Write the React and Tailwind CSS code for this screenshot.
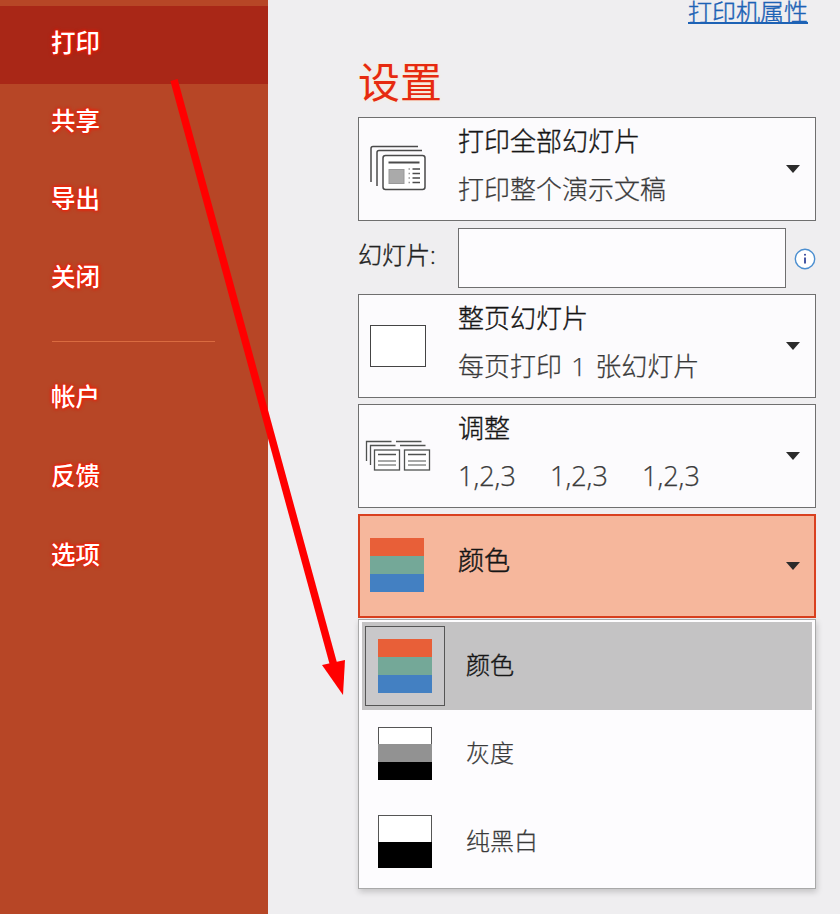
import React, { useState } from 'react';

const primaryNav = ['打印', '共享', '导出', '关闭'];
const secondaryNav = ['帐户', '反馈', '选项'];

const colorModes = [
  { id: 'color', label: '颜色', Icon: ColorIcon },
  { id: 'gray', label: '灰度', Icon: GrayscaleIcon },
  { id: 'bw', label: '纯黑白', Icon: BlackWhiteIcon },
];

/* --- Icons --- */

function ColorIcon() {
  return (
    <svg width="54" height="54" viewBox="0 0 54 54" className="shrink-0">
      <rect width="54" height="18" fill="#e85f38" />
      <rect y="18" width="54" height="18" fill="#74a898" />
      <rect y="36" width="54" height="18" fill="#4380c2" />
    </svg>
  );
}

function GrayscaleIcon() {
  return (
    <svg width="54" height="54" viewBox="0 0 54 54" className="shrink-0">
      <rect x="0.5" y="0.5" width="53" height="35" fill="#fff" stroke="#555" />
      <rect y="17" width="54" height="18" fill="#929292" />
      <rect y="35" width="54" height="18" fill="#000" />
    </svg>
  );
}

function BlackWhiteIcon() {
  return (
    <svg width="54" height="54" viewBox="0 0 54 54" className="shrink-0">
      <rect x="0.5" y="0.5" width="53" height="35" fill="#fff" stroke="#555" />
      <rect y="27" width="54" height="26" fill="#000" />
    </svg>
  );
}

function AllSlidesIcon() {
  return (
    <svg width="58" height="48" viewBox="0 0 58 48" fill="none" stroke="#4a4a4a" strokeWidth="1.5">
      <path d="M2 37V3.5Q2 1.5 4 1.5H49" />
      <path d="M8 41V7.5Q8 5.5 10 5.5H53" />
      <rect x="14" y="10.5" width="42" height="34" rx="2.5" fill="#fff" />
      <path d="M19.5 17.5H50.5" strokeWidth="2" />
      <rect x="20" y="24.5" width="15" height="14" fill="#aaa" stroke="#999" strokeWidth="1" />
      <path d="M43.5 24H51M43.5 28.5H51M43.5 33H51M43.5 37.5H51" strokeWidth="1.3" />
      <path d="M39.5 24H41M39.5 28.5H41M39.5 33H41M39.5 37.5H41" stroke="#999" strokeWidth="1.3" />
    </svg>
  );
}

function FullPageIcon() {
  return <div className="h-[42px] w-14 border border-[#444] bg-white" />;
}

function CollateIcon() {
  return (
    <svg width="66" height="32" viewBox="0 0 66 32" fill="none" stroke="#4f5250" strokeWidth="1.3">
      <path d="M1.5 21V1.5H26.5M5.5 25V5.5H30.5M31 1.5H56.5M35 5.5H60.5" />
      <rect x="9.5" y="10" width="25" height="20" fill="#fff" />
      <rect x="39.5" y="10" width="25" height="20" fill="#fff" />
      <path d="M13 14.5H31M43 14.5H61" />
      <path d="M13 21H31M13 25H31M43 21H61M43 25H61" strokeWidth="1" />
    </svg>
  );
}

function Caret() {
  return (
    <svg width="14" height="8" viewBox="0 0 14 8" className="shrink-0">
      <path d="M0 0H14L7 8Z" fill="#2b2b2b" />
    </svg>
  );
}

function InfoIcon() {
  return (
    <svg width="22" height="22" viewBox="0 0 22 22" className="shrink-0">
      <circle cx="11" cy="11" r="9.7" fill="#fff" stroke="#4c8fd0" strokeWidth="1.4" />
      <path d="M11 9.5V15.5" stroke="#33459a" strokeWidth="1.8" />
      <circle cx="11" cy="6.8" r="1" fill="#33459a" />
    </svg>
  );
}

/* --- Sidebar --- */

function NavItem({ label, active, onClick }) {
  return (
    <button
      type="button"
      onClick={onClick}
      className={`flex h-[78px] w-full shrink-0 items-center pb-[3px] pl-[51px] text-[24.5px] font-medium text-white [text-shadow:0_0_2px_#ff1800,0_0_3px_#ff1800,0_0_4px_#ff1800] ${active ? 'bg-[#a92717]' : ''}`}
    >
      {label}
    </button>
  );
}

function Sidebar() {
  const [active, setActive] = useState('打印');

  return (
    <nav className="flex w-[268px] shrink-0 flex-col bg-[#b74626] pt-1.5">
      {primaryNav.map((label) => (
        <NavItem key={label} label={label} active={active === label} onClick={() => setActive(label)} />
      ))}
      <div className="mt-[23px] mb-[18px] ml-[52px] h-px w-[163px] shrink-0 bg-[#da6b40]" />
      <div className="flex flex-col gap-px">
        {secondaryNav.map((label) => (
          <NavItem key={label} label={label} active={active === label} onClick={() => setActive(label)} />
        ))}
      </div>
    </nav>
  );
}

/* --- Settings --- */

function SettingCard({ icon, title, children }) {
  return (
    <button
      type="button"
      className="flex h-[104px] w-full items-center border border-[#6f6f6f] bg-[#fcfbfd] pr-[15px] text-left"
    >
      <div className="flex w-[78px] shrink-0 justify-center">{icon}</div>
      <div className="-mt-0.5 flex h-full flex-1 flex-col pl-[21px] text-[26px] leading-[48px]">
        <span className="text-[#161616] [-webkit-text-stroke:0.35px_#161616]">{title}</span>
        <span className="text-[#3a3a3a] [-webkit-text-stroke:0.25px_#3a3a3a] [word-spacing:2.5px]">{children}</span>
      </div>
      <Caret />
    </button>
  );
}

function ColorMenu({ value, onChange }) {
  return (
    <ul className="h-[270px] border border-[#a9a9a9] bg-[#fdfcfe] px-[3px] pt-[2px] shadow-[1px_3px_6px_rgba(0,0,0,0.18)]">
      {colorModes.map(({ id, label, Icon }) => {
        const selected = id === value;
        return (
          <li
            key={id}
            onClick={() => onChange(id)}
            className={`flex h-[88px] items-center ${selected ? 'bg-[#c4c3c4]' : ''}`}
          >
            <div
              className={`ml-[3px] flex h-20 w-20 items-center justify-center border ${selected ? 'border-[#555] bg-[#c9c8ca]' : 'border-transparent'}`}
            >
              <Icon />
            </div>
            <span
              className={`pb-0.5 pl-[21px] text-2xl ${selected ? 'text-[#161616] [-webkit-text-stroke:0.4px_#161616]' : 'text-[#3a3a3a] [-webkit-text-stroke:0.25px_#3a3a3a]'}`}
            >
              {label}
            </span>
          </li>
        );
      })}
    </ul>
  );
}

function App() {
  const [colorMode, setColorMode] = useState('color');
  const [slides, setSlides] = useState('');
  const current = colorModes.find((mode) => mode.id === colorMode);

  return (
    <div className="relative flex h-[914px] w-[840px] overflow-hidden bg-[#efeef0] font-['Open_Sans','Noto_Sans_CJK_SC',sans-serif] font-light">
      <Sidebar />

      <main className="flex flex-1 flex-col pr-6 pl-[90px]">
        <a
          href="#printer"
          className="mr-2 h-6 self-end border-b-2 border-[#1d62b5] text-2xl leading-6 text-[#1d62b5] [-webkit-text-stroke:0.4px_#1d62b5]"
        >
          打印机属性
        </a>

        <h1 className="mt-[26px] text-[42px] leading-[64px] font-normal text-[#e62a10] [text-shadow:0_0_3px_#ffe9c4]">
          设置
        </h1>

        <div className="mt-[3px] flex flex-col gap-1.5">
          <SettingCard icon={<AllSlidesIcon />} title="打印全部幻灯片">
            打印整个演示文稿
          </SettingCard>

          <div className="mt-[1px] flex h-[60px] items-center">
            <label htmlFor="slides" className="w-[100px] pb-1.5 text-2xl text-[#222] [-webkit-text-stroke:0.4px_#222]">
              幻灯片:
            </label>
            <input
              id="slides"
              type="text"
              value={slides}
              onChange={(e) => setSlides(e.target.value)}
              className="h-full w-[328px] border border-[#6f6f6f] bg-[#fdfcfe] px-2 text-2xl"
            />
            <span className="mt-0.5 ml-2">
              <InfoIcon />
            </span>
          </div>

          <SettingCard icon={<FullPageIcon />} title="整页幻灯片">
            每页打印 1 张幻灯片
          </SettingCard>

          <SettingCard icon={<CollateIcon />} title="调整">
            <span className="flex text-[27px]">
              <span className="w-[92px]">1,2,3</span>
              <span className="w-[92px]">1,2,3</span>
              <span className="w-[92px]">1,2,3</span>
            </span>
          </SettingCard>
        </div>

        <button
          type="button"
          className="mt-1.5 flex h-[104px] shrink-0 items-center border-2 border-[#d9401f] bg-[#f6b79c] pr-3.5 pl-2.5 text-left"
        >
          <span className="pb-0.5">
            <current.Icon />
          </span>
          <span className="flex-1 pb-3 pl-[34px] text-[26px] text-[#161616] [-webkit-text-stroke:0.5px_#161616]">
            {current.label}
          </span>
          <Caret />
        </button>
        <div className="mt-[1px]">
          <ColorMenu value={colorMode} onChange={setColorMode} />
        </div>
      </main>

      {/* Arrow from the print entry to the color list */}
      <svg
        className="pointer-events-none absolute inset-0"
        width="840"
        height="914"
        viewBox="0 0 840 914"
      >
        <path d="M174 80L334 666" stroke="#ff0000" strokeWidth="7.5" />
        <path d="M322 665L345 660L343 695Z" fill="#ff0000" />
      </svg>
    </div>
  );
}

export default App;
